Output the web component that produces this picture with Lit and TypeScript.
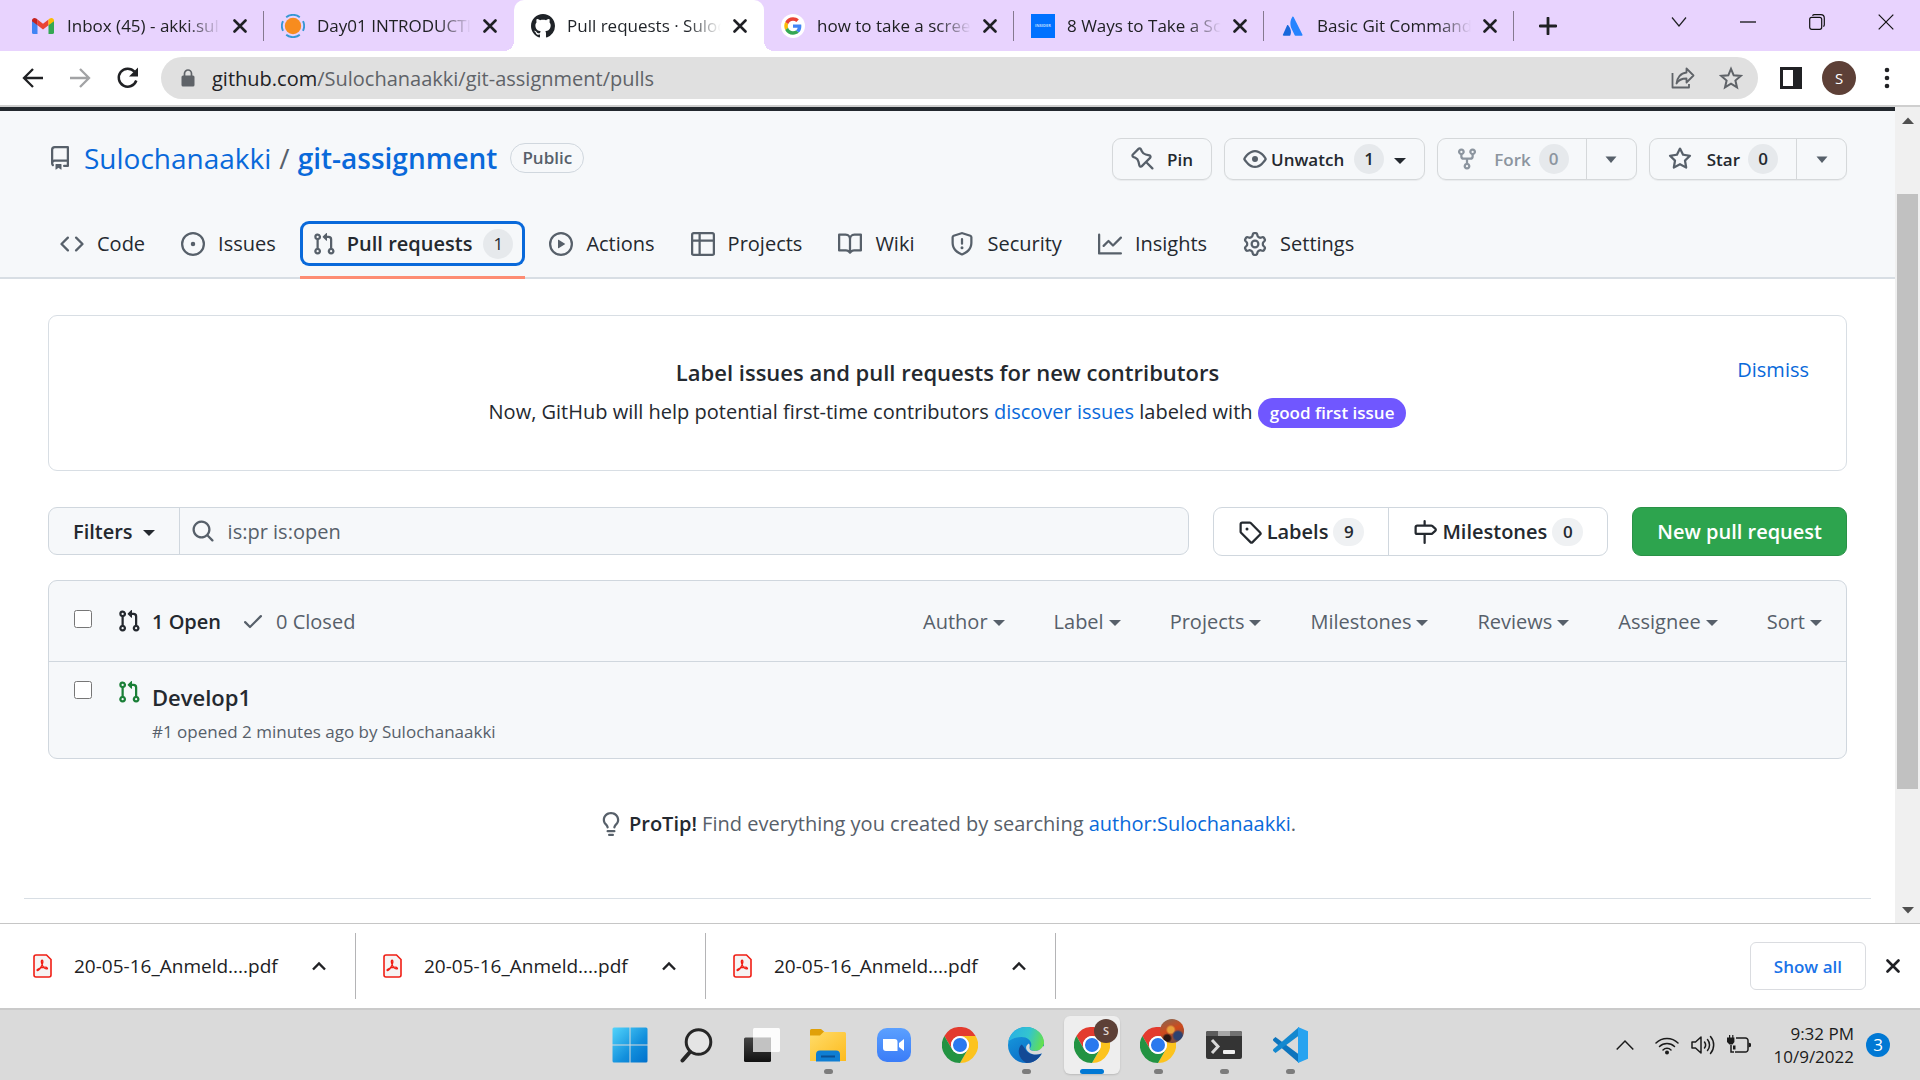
import { LitElement, html, css, svg, nothing, TemplateResult, SVGTemplateResult } from "lit";
import { customElement } from "lit/decorators.js";
import { classMap } from "lit/directives/class-map.js";

const OCTICONS: Record<string, string> = {
  repo: "M2 2.5A2.5 2.5 0 014.5 0h8.75a.75.75 0 01.75.75v12.5a.75.75 0 01-.75.75h-2.5a.75.75 0 110-1.5h1.75v-2h-8a1 1 0 00-.714 1.7.75.75 0 01-1.072 1.05A2.495 2.495 0 012 11.5v-9zm10.5-1V9h-8c-.356 0-.694.074-1 .208V2.5a1 1 0 011-1h8zM5 12.25v3.25a.25.25 0 00.4.2l1.45-1.087a.25.25 0 01.3 0L8.6 15.7a.25.25 0 00.4-.2v-3.25a.25.25 0 00-.25-.25h-3.5a.25.25 0 00-.25.25z",
  code: "M4.72 3.22a.75.75 0 011.06 1.06L2.06 8l3.72 3.72a.75.75 0 11-1.06 1.06L.47 8.53a.75.75 0 010-1.06l4.25-4.25zm6.56 0a.75.75 0 10-1.06 1.06L13.94 8l-3.72 3.72a.75.75 0 101.06 1.06l4.25-4.25a.75.75 0 000-1.06l-4.25-4.25z",
  issue: "M8 9.5a1.5 1.5 0 100-3 1.5 1.5 0 000 3zM8 0a8 8 0 100 16A8 8 0 008 0zM1.5 8a6.5 6.5 0 1113 0 6.5 6.5 0 01-13 0z",
  pull: "M7.177 3.073L9.573.677A.25.25 0 0110 .854v4.792a.25.25 0 01-.427.177L7.177 3.427a.25.25 0 010-.354zM3.75 2.5a.75.75 0 100 1.5.75.75 0 000-1.5zm-2.25.75a2.25 2.25 0 113 2.122v5.256a2.251 2.251 0 11-1.5 0V5.372A2.25 2.25 0 011.5 3.25zM11 2.5h-1V4h1a1 1 0 011 1v5.628a2.251 2.251 0 101.5 0V5A2.5 2.5 0 0011 2.5zm1 10.25a.75.75 0 111.5 0 .75.75 0 01-1.5 0zM3.75 12a.75.75 0 100 1.5.75.75 0 000-1.5z",
  play: "M1.5 8a6.5 6.5 0 1113 0 6.5 6.5 0 01-13 0zM8 0a8 8 0 100 16A8 8 0 008 0zM6.379 5.227A.25.25 0 006 5.442v5.117a.25.25 0 00.379.214l4.264-2.559a.25.25 0 000-.428L6.379 5.227z",
  table: "M0 1.75C0 .784.784 0 1.75 0h12.5C15.216 0 16 .784 16 1.75v3.585a.746.746 0 010 .83v8.085A1.75 1.75 0 0114.25 16H6.309a.748.748 0 01-1.118 0H1.75A1.75 1.75 0 010 14.25V6.165a.746.746 0 010-.83V1.75zM1.5 6.5v7.75c0 .138.112.25.25.25H5v-8H1.5zM5 5H1.5V1.75a.25.25 0 01.25-.25H5V5zm1.5 1.5v8h7.75a.25.25 0 00.25-.25V6.5h-8zm8-1.5h-8V1.5h7.75a.25.25 0 01.25.25V5z",
  book: "M0 1.75A.75.75 0 01.75 1h4.253c1.227 0 2.317.59 3 1.501A3.744 3.744 0 0111.006 1h4.245a.75.75 0 01.75.75v10.5a.75.75 0 01-.75.75h-4.507a2.25 2.25 0 00-1.591.659l-.622.621a.75.75 0 01-1.06 0l-.622-.621A2.25 2.25 0 005.258 13H.75a.75.75 0 01-.75-.75V1.75zm8.755 3a2.25 2.25 0 012.25-2.25H14.5v9h-3.757c-.71 0-1.4.201-1.992.572l.004-7.322zm-1.504 7.324l.004-5.073-.002-2.253A2.25 2.25 0 005.003 2.5H1.5v9h3.757a3.75 3.75 0 011.994.574z",
  shield: "M7.467.133a1.75 1.75 0 011.066 0l5.25 1.68A1.75 1.75 0 0115 3.48V7c0 1.566-.32 3.182-1.303 4.682-.983 1.498-2.585 2.813-5.032 3.855a1.7 1.7 0 01-1.33 0c-2.447-1.042-4.049-2.357-5.032-3.855C1.32 10.182 1 8.566 1 7V3.48a1.75 1.75 0 011.217-1.667l5.25-1.68zm.61 1.429a.25.25 0 00-.153 0l-5.25 1.68a.25.25 0 00-.174.238V7c0 1.358.275 2.666 1.057 3.86.784 1.194 2.121 2.34 4.366 3.297a.2.2 0 00.154 0c2.245-.956 3.582-2.104 4.366-3.298C13.225 9.666 13.5 8.36 13.5 7V3.48a.25.25 0 00-.174-.237l-5.25-1.68zM9 10.5a1 1 0 11-2 0 1 1 0 012 0zm-.25-5.75a.75.75 0 10-1.5 0v3a.75.75 0 001.5 0v-3z",
  graph: "M1.5 1.75a.75.75 0 00-1.5 0v12.5c0 .414.336.75.75.75h14.5a.75.75 0 000-1.5H1.5V1.75zm14.28 2.53a.75.75 0 00-1.06-1.06L10 7.94 7.53 5.47a.75.75 0 00-1.06 0L3.22 8.72a.75.75 0 001.06 1.06L7 7.06l2.47 2.47a.75.75 0 001.06 0l5.25-5.25z",
  gear: "M7.429 1.525a6.593 6.593 0 011.142 0c.036.003.108.036.137.146l.289 1.105c.147.56.55.967.997 1.189.174.086.341.183.501.29.417.278.97.423 1.53.27l1.102-.303c.11-.03.175.016.195.046.219.31.41.641.573.989.014.031.022.11-.059.19l-.815.806c-.411.406-.562.957-.53 1.456a4.588 4.588 0 010 .582c-.032.499.119 1.05.53 1.456l.815.806c.08.08.073.159.059.19a6.494 6.494 0 01-.573.99c-.02.029-.086.074-.195.045l-1.103-.303c-.559-.153-1.112-.008-1.529.27-.16.107-.327.204-.5.29-.449.222-.851.628-.998 1.189l-.289 1.105c-.029.11-.101.143-.137.146a6.613 6.613 0 01-1.142 0c-.036-.003-.108-.037-.137-.146l-.289-1.105c-.147-.56-.55-.967-.997-1.189a4.502 4.502 0 01-.501-.29c-.417-.278-.97-.423-1.53-.27l-1.102.303c-.11.03-.175-.016-.195-.046a6.492 6.492 0 01-.573-.989c-.014-.031-.022-.11.059-.19l.815-.806c.411-.406.562-.957.53-1.456a4.587 4.587 0 010-.582c.032-.499-.119-1.05-.53-1.456l-.815-.806c-.08-.08-.073-.159-.059-.19a6.44 6.44 0 01.573-.99c.02-.029.086-.075.195-.045l1.103.303c.559.153 1.112.008 1.529-.27.16-.107.327-.204.5-.29.449-.222.851-.628.998-1.189l.289-1.105c.029-.11.101-.143.137-.146zM8 0c-.236 0-.47.01-.701.03-.743.065-1.29.615-1.458 1.261l-.29 1.106c-.017.066-.078.158-.211.224a5.994 5.994 0 00-.668.386c-.123.082-.233.09-.3.071L3.27 2.776c-.644-.177-1.392.02-1.82.63a7.977 7.977 0 00-.704 1.217c-.315.675-.111 1.422.363 1.891l.815.806c.05.048.098.147.088.294a6.084 6.084 0 000 .772c.01.147-.038.246-.088.294l-.815.806c-.474.469-.678 1.216-.363 1.891.2.428.436.835.704 1.218.428.609 1.176.806 1.82.63l1.103-.303c.066-.019.176-.011.299.071.213.143.436.272.668.386.133.066.194.158.212.224l.289 1.106c.169.646.715 1.196 1.458 1.26a8.094 8.094 0 001.402 0c.743-.064 1.29-.614 1.458-1.26l.29-1.106c.017-.066.078-.158.211-.224a5.98 5.98 0 00.668-.386c.123-.082.233-.09.3-.071l1.102.302c.644.177 1.392-.02 1.82-.63.268-.382.505-.789.704-1.217.315-.675.111-1.422-.364-1.891l-.814-.806c-.05-.048-.098-.147-.088-.294a6.1 6.1 0 000-.772c-.01-.147.039-.246.088-.294l.814-.806c.475-.469.679-1.216.364-1.891a7.992 7.992 0 00-.704-1.218c-.428-.609-1.176-.806-1.82-.63l-1.103.303c-.066.019-.176.011-.299-.071a5.991 5.991 0 00-.668-.386c-.133-.066-.194-.158-.212-.224L10.16 1.29C9.99.645 9.444.095 8.701.031A8.094 8.094 0 008 0zm1.5 8a1.5 1.5 0 11-3 0 1.5 1.5 0 013 0zM11 8a3 3 0 11-6 0 3 3 0 016 0z",
  eye: "M1.679 7.932c.412-.621 1.242-1.75 2.366-2.717C5.175 4.242 6.527 3.5 8 3.5c1.473 0 2.824.742 3.955 1.715 1.124.967 1.954 2.096 2.366 2.717a.119.119 0 010 .136c-.412.621-1.242 1.75-2.366 2.717C10.825 11.758 9.473 12.5 8 12.5c-1.473 0-2.824-.742-3.955-1.715C2.92 9.818 2.09 8.69 1.679 8.068a.119.119 0 010-.136zM8 2c-1.981 0-3.67.992-4.933 2.078C1.797 5.169.88 6.423.43 7.1a1.619 1.619 0 000 1.798c.45.678 1.367 1.932 2.637 3.024C4.329 13.008 6.019 14 8 14c1.981 0 3.67-.992 4.933-2.078 1.27-1.091 2.187-2.345 2.637-3.023a1.619 1.619 0 000-1.798c-.45-.678-1.367-1.932-2.637-3.023C11.671 2.992 9.981 2 8 2zm0 8a2 2 0 100-4 2 2 0 000 4z",
  fork: "M5 3.25a.75.75 0 11-1.5 0 .75.75 0 011.5 0zm0 2.122a2.25 2.25 0 10-1.5 0v.878A2.25 2.25 0 005.75 8.5h1.5v2.128a2.251 2.251 0 101.5 0V8.5h1.5a2.25 2.25 0 002.25-2.25v-.878a2.25 2.25 0 10-1.5 0v.878a.75.75 0 01-.75.75h-4.5A.75.75 0 015 6.25v-.878zm3.75 7.378a.75.75 0 11-1.5 0 .75.75 0 011.5 0zm3-8.75a.75.75 0 100-1.5.75.75 0 000 1.5z",
  star: "M8 .25a.75.75 0 01.673.418l1.882 3.815 4.21.612a.75.75 0 01.416 1.279l-3.046 2.97.719 4.192a.75.75 0 01-1.088.791L8 12.347l-3.766 1.98a.75.75 0 01-1.088-.79l.72-4.194L.818 6.374a.75.75 0 01.416-1.28l4.21-.611L7.327.668A.75.75 0 018 .25zm0 2.445L6.615 5.5a.75.75 0 01-.564.41l-3.097.45 2.24 2.184a.75.75 0 01.216.664l-.528 3.084 2.769-1.456a.75.75 0 01.698 0l2.77 1.456-.53-3.084a.75.75 0 01.216-.664l2.24-2.183-3.096-.45a.75.75 0 01-.564-.41L8 2.694v.001z",
  pin: "M4.456.734a1.75 1.75 0 012.826.504l.613 1.327a3.081 3.081 0 002.084 1.707l2.454.584c1.332.317 1.8 1.972.832 2.94L11.06 10l3.72 3.72a.75.75 0 11-1.061 1.06L10 11.06l-2.204 2.205c-.968.968-2.623.5-2.94-.832l-.584-2.454a3.081 3.081 0 00-1.707-2.084l-1.327-.613a1.75 1.75 0 01-.504-2.826L4.456.734zM5.92 1.866a.25.25 0 00-.404-.072L1.794 5.516a.25.25 0 00.072.404l1.328.613A4.582 4.582 0 015.73 9.63l.584 2.454a.25.25 0 00.42.12l5.47-5.47a.25.25 0 00-.12-.42L9.63 5.73a4.581 4.581 0 01-3.098-2.537L5.92 1.866z",
  search: "M11.5 7a4.499 4.499 0 11-8.998 0A4.499 4.499 0 0111.5 7zm-.82 4.74a6 6 0 111.06-1.06l3.04 3.04a.75.75 0 11-1.06 1.06l-3.04-3.04z",
  tag: "M2.5 7.775V2.75a.25.25 0 01.25-.25h5.025a.25.25 0 01.177.073l6.25 6.25a.25.25 0 010 .354l-5.025 5.025a.25.25 0 01-.354 0l-6.25-6.25a.25.25 0 01-.073-.177zm-1.5 0V2.75C1 1.784 1.784 1 2.75 1h5.025c.464 0 .91.184 1.238.513l6.25 6.25a1.75 1.75 0 010 2.474l-5.026 5.026a1.75 1.75 0 01-2.474 0l-6.25-6.25A1.75 1.75 0 011 7.775zM6 5a1 1 0 100 2 1 1 0 000-2z",
  milestone: "M7.75 0a.75.75 0 01.75.75V3h3.634c.414 0 .814.147 1.13.414l2.07 1.75a1.75 1.75 0 010 2.672l-2.07 1.75a1.75 1.75 0 01-1.13.414H8.5v5.25a.75.75 0 11-1.5 0V10H2.75A1.75 1.75 0 011 8.25v-3.5C1 3.784 1.784 3 2.75 3H7V.75A.75.75 0 017.75 0zm0 8.5h4.384a.25.25 0 00.161-.06l2.07-1.75a.25.25 0 000-.38l-2.07-1.75a.25.25 0 00-.161-.06H2.75a.25.25 0 00-.25.25v3.5c0 .138.112.25.25.25h5z",
  check: "M13.78 4.22a.75.75 0 010 1.06l-7.25 7.25a.75.75 0 01-1.06 0L2.22 9.28a.75.75 0 011.06-1.06L6 10.94l6.72-6.72a.75.75 0 011.06 0z",
  bulb: "M8 1.5c-2.363 0-4 1.69-4 3.75 0 .984.424 1.625.984 2.304l.214.253c.223.264.47.556.673.848.284.411.537.896.621 1.49a.75.75 0 01-1.484.211c-.04-.282-.163-.547-.37-.847a8.695 8.695 0 00-.542-.68c-.084-.1-.173-.205-.268-.32C3.201 7.75 2.5 6.766 2.5 5.25 2.5 2.31 4.863 0 8 0s5.5 2.31 5.5 5.25c0 1.516-.701 2.5-1.328 3.259-.095.115-.184.22-.268.319-.207.245-.383.453-.541.681-.208.3-.33.565-.37.847a.75.75 0 01-1.485-.212c.084-.593.337-1.078.621-1.489.203-.292.45-.584.673-.848.075-.088.147-.173.213-.253.561-.679.985-1.32.985-2.304 0-2.06-1.637-3.75-4-3.75zM6 15.25a.75.75 0 01.75-.75h2.5a.75.75 0 010 1.5h-2.5a.75.75 0 01-.75-.75zM5.75 12a.75.75 0 000 1.5h4.5a.75.75 0 000-1.5h-4.5z",
  github: "M8 0C3.58 0 0 3.58 0 8c0 3.54 2.29 6.53 5.47 7.59.4.07.55-.17.55-.38 0-.19-.01-.82-.01-1.49-2.01.37-2.53-.49-2.69-.94-.09-.23-.48-.94-.82-1.13-.28-.15-.68-.52-.01-.53.63-.01 1.08.58 1.23.82.72 1.21 1.87.87 2.33.66.07-.52.28-.87.51-1.07-1.78-.2-3.64-.89-3.64-3.95 0-.87.31-1.59.82-2.15-.08-.2-.36-1.02.08-2.12 0 0 .67-.21 2.2.82.64-.18 1.32-.27 2-.27.68 0 1.36.09 2 .27 1.53-1.04 2.2-.82 2.2-.82.44 1.1.16 1.92.08 2.12.51.56.82 1.27.82 2.15 0 3.07-1.87 3.75-3.65 3.95.29.25.54.73.54 1.48 0 1.07-.01 1.93-.01 2.2 0 .21.15.46.55.38A8.013 8.013 0 0016 8c0-4.42-3.58-8-8-8z",
};

const octicon = (name: string, size = 24): TemplateResult =>
  html`<svg class="icon" width=${size} height=${size} viewBox="0 0 16 16" aria-hidden="true"><path fill="currentColor" fill-rule="evenodd" d=${OCTICONS[name]}></path></svg>`;

const glyph = (w: number, h: number, body: SVGTemplateResult, box = `0 0 ${w} ${h}`): TemplateResult =>
  html`<svg class="icon" width=${w} height=${h} viewBox=${box} aria-hidden="true">${body}</svg>`;

// Sits slightly below the optical middle, like a caret that follows a word.
const caret = () => glyph(12, 10, svg`<path fill="currentColor" d="M0 4h12L6 10z"></path>`);
const arrow = () => glyph(12, 8, svg`<path fill="currentColor" d="M.5 1.500h11L6 8z"></path>`);
const cross = () =>
  glyph(14, 14, svg`<path d="M1.500 1.500l11 11M12.500 1.500l-11 11" fill="none" stroke="#1f2024" stroke-width="2.600" stroke-linecap="round"></path>`);

const BASE = css`
  :host,
  * {
    box-sizing: border-box;
  }
  button,
  input {
    font: inherit;
    color: inherit;
    margin: 0;
  }
  button {
    padding: 0;
    border: 0;
    background: none;
    cursor: pointer;
    white-space: nowrap;
  }
  a {
    color: inherit;
    text-decoration: none;
    white-space: nowrap;
  }
  .icon {
    display: block;
    flex: none;
  }
`;

const gmail = () =>
  glyph(
    24,
    24,
    svg`<path fill="#4285f4" d="M1 6.500L6.500 10.500V20H2.600A1.600 1.600 0 0 1 1 18.400z"></path>
      <path fill="#34a853" d="M23 6.500L17.500 10.500V20h3.900a1.600 1.600 0 0 0 1.600-1.600z"></path>
      <path fill="#ea4335" d="M6.500 5.500L12 9.800l5.500-4.300v5.800L12 15.500l-5.500-4.200z"></path>
      <path fill="#c5221f" d="M1 6.500C1 4 3.700 3.300 5.300 4.600L6.500 5.500v5.800L1 7.200z"></path>
      <path fill="#fbbc04" d="M23 6.500c0-2.500-2.700-3.200-4.300-1.900l-1.200.9v5.800L23 7.200z"></path>`
  );

const dayLogo = () =>
  glyph(
    24,
    24,
    svg`<circle cx="12" cy="12" r="8.200" fill="#f78c1e"></circle>
      <g fill="none" stroke="#3797d4" stroke-width="1.900"><path d="M5.200 3.200a11 11 0 0 1 13.600 0"></path><path d="M5.200 20.800a11 11 0 0 0 13.600 0"></path><path d="M2 7.200a11 11 0 0 0 0 9.600"></path><path d="M22 7.200a11 11 0 0 1 0 9.600"></path></g>`
  );

const google = () =>
  glyph(
    24,
    24,
    svg`<circle cx="24" cy="24" r="33" fill="#fff"></circle>
      <path fill="#EA4335" d="M24 9.500c3.540 0 6.710 1.220 9.210 3.600l6.850-6.850C35.900 2.380 30.470 0 24 0 14.620 0 6.510 5.380 2.560 13.220l7.980 6.190C12.430 13.720 17.740 9.500 24 9.500z"></path>
      <path fill="#4285F4" d="M46.980 24.550c0-1.570-.15-3.090-.38-4.550H24v9.020h12.940c-.58 2.960-2.260 5.480-4.780 7.180l7.730 6c4.510-4.180 7.090-10.360 7.090-17.650z"></path>
      <path fill="#FBBC05" d="M10.530 28.590c-.48-1.450-.76-2.990-.76-4.590s.27-3.140.76-4.590l-7.980-6.190C.92 16.460 0 20.120 0 24c0 3.880.92 7.540 2.560 10.780l7.970-6.190z"></path>
      <path fill="#34A853" d="M24 48c6.480 0 11.930-2.130 15.890-5.810l-7.730-6c-2.150 1.450-4.920 2.300-8.160 2.300-6.260 0-11.570-4.220-13.470-9.910l-7.980 6.190C6.510 42.620 14.620 48 24 48z"></path>`,
    "-9 -9 66 66"
  );

const insider = () =>
  html`<svg class="icon" width="24" height="24" viewBox="0 0 24 24" aria-hidden="true"><rect width="24" height="24" fill="#0071ff"></rect><text x="12" y="13" fill="#b9d8ff" font-size="4" font-weight="700" text-anchor="middle">INSIDER</text></svg>`;

const atlassian = () =>
  glyph(
    24,
    24,
    svg`<path fill="#1868db" d="M7.200 11.300c-.4-.4-.9-.4-1.200.2L1.900 20.800c-.2.500.1.900.6.900h6.200c.3 0 .6-.2.700-.5 1.300-2.800.5-7-2.200-9.900z"></path>
      <path fill="#2684ff" d="M11.300 3c-2.500 4-2.300 8.400-.7 11.700l3.100 6.500c.1.300.4.500.7.500h6.500c.5 0 .8-.4.600-.9L12.600 3.100c-.3-.6-1-.7-1.300-.1z"></path>`
  );

const chromeLogo = () =>
  glyph(
    36,
    36,
    svg`<path fill="#e33b2e" d="M4.900 13A22 22 0 0 1 43.100 13H24A11 11 0 0 0 14.500 29.500z"></path>
      <path fill="#fcc31e" d="M43.100 13A22 22 0 0 1 24 46L33.500 29.500A11 11 0 0 0 24 13z"></path>
      <path fill="#229342" d="M24 46A22 22 0 0 1 4.900 13L14.500 29.500A11 11 0 0 0 33.500 29.500z"></path>
      <circle cx="24" cy="24" r="11" fill="#fff"></circle><circle cx="24" cy="24" r="8.600" fill="#2a79ee"></circle>`,
    "2 2 44 44"
  );

interface Tab {
  title: string;
  icon: () => TemplateResult;
  active?: boolean;
}

const TABS: Tab[] = [
  { title: "Inbox (45) - akki.sul", icon: gmail },
  { title: "Day01 INTRODUCTI", icon: dayLogo },
  { title: "Pull requests · Suloc", icon: () => octicon("github"), active: true },
  { title: "how to take a scree", icon: google },
  { title: "8 Ways to Take a Sc", icon: insider },
  { title: "Basic Git Command", icon: atlassian },
];

@customElement("browser-chrome")
export class BrowserChrome extends LitElement {
  static styles = [
    BASE,
    css`
      :host {
        display: block;
        color: #202124;
      }
      .strip {
        display: flex;
        align-items: stretch;
        height: 51px;
        padding-left: 14px;
        background: #e8d3fe;
      }
      .tab {
        display: flex;
        align-items: center;
        gap: 12px;
        flex: 0 1 250px;
        min-width: 0;
        padding: 0 17px;
        font-size: 17px;
        position: relative;
      }
      .tab.ruled::after {
        content: "";
        position: absolute;
        right: 0;
        top: 11px;
        height: 30px;
        width: 1px;
        background: #85798f;
      }
      .tab.active {
        background: #fff;
        border-radius: 10px 10px 0 0;
        color: #1f2328;
      }
      .tab.active::before,
      .tab.active::after {
        content: "";
        position: absolute;
        bottom: 0;
        width: 10px;
        height: 10px;
      }
      .tab.active::before {
        right: 100%;
        background: radial-gradient(circle at 0 0, transparent 10px, #fff 10px);
      }
      .tab.active::after {
        left: 100%;
        background: radial-gradient(circle at 100% 0, transparent 10px, #fff 10px);
      }
      .title {
        flex: 1;
        min-width: 0;
        white-space: nowrap;
        mask-image: linear-gradient(to right, #000 120px, transparent);
      }
      .plus {
        padding: 0 25px;
      }
      .window {
        display: flex;
        align-items: center;
        gap: 53px;
        margin-left: auto;
        padding: 0 26px 8px 0;
      }
      .bar {
        display: flex;
        align-items: center;
        height: 54px;
        padding: 0 24px 0 22px;
        background: #fff;
      }
      .nav {
        display: flex;
        gap: 25px;
        align-items: center;
      }
      .address {
        flex: 1;
        display: flex;
        align-items: center;
        height: 42px;
        margin: 0 22px 0 21px;
        padding: 0 15px 0 20px;
        border-radius: 21px;
        background: #e0e0e0;
        font-size: 20px;
        color: #5f6368;
      }
      .url {
        flex: 1;
        margin-left: 17px;
      }
      .host {
        color: #202124;
      }
      .tools {
        display: flex;
        gap: 24px;
      }
      .right {
        display: flex;
        align-items: center;
        gap: 20px;
      }
      .avatar {
        width: 34px;
        height: 34px;
        border-radius: 50%;
        background: #5d4037;
        color: #fff;
        font-size: 15px;
        line-height: 34px;
        text-align: center;
      }
      .rule {
        height: 2px;
        background: #cfcfcf;
      }
    `,
  ];

  render() {
    return html`
      <div class="strip">
        ${TABS.map((t, i) => {
          const ruled = !t.active && !TABS[i + 1]?.active;
          return html`<div class=${classMap({ tab: true, active: !!t.active, ruled })}>
            ${t.icon()}<span class="title">${t.title}</span>
            <button aria-label="Close tab">${cross()}</button>
          </div>`;
        })}
        <button class="plus" aria-label="New tab">
          ${glyph(18, 18, svg`<path d="M9 1v16M1 9h16" stroke="#202124" stroke-width="2.800" stroke-linecap="round"></path>`)}
        </button>
        <div class="window">
          <button aria-label="Search tabs">${glyph(16, 16, svg`<path d="M1 3.500l7 8.500 7-8.500" fill="none" stroke="#202124" stroke-width="1.200"></path>`)}</button>
          <button aria-label="Minimize">${glyph(16, 16, svg`<path d="M0 8h16" stroke="#111" stroke-width="1.300"></path>`)}</button>
          <button aria-label="Restore">${glyph(16, 16, svg`<g fill="none" stroke="#111" stroke-width="1.200"><rect x=".7" y="3.300" width="12" height="12" rx="2"></rect><path d="M3.500 1.800q.5-1.100 2-1.100h6.300q3.500 0 3.500 3.500v6.500q0 1.300-1 1.900"></path></g>`)}</button>
          <button aria-label="Close window">${glyph(16, 16, svg`<path d="M.7.7l14.600 14.600M15.300.7L.7 15.300" stroke="#111" stroke-width="1.200"></path>`)}</button>
        </div>
      </div>
      <div class="bar">
        <div class="nav">
          <button aria-label="Back">${glyph(22, 22, svg`<path d="M21 11H2.500M11 2L2 11l9 9" fill="none" stroke="#202124" stroke-width="2.300"></path>`)}</button>
          <button aria-label="Forward">${glyph(22, 22, svg`<path d="M1 11h18.500M11 2l9 9-9 9" fill="none" stroke="#a2a3a5" stroke-width="2.300"></path>`)}</button>
          <button aria-label="Reload">${glyph(24, 24, svg`<path d="M20.300 14.500A9 9 0 1 1 18.500 5.700" fill="none" stroke="#202124" stroke-width="2.500"></path><path d="M22 1.500v9h-9z" fill="#202124"></path>`)}</button>
        </div>
        <div class="address">
          ${glyph(14, 18, svg`<rect x=".5" y="6.500" width="13" height="11" rx="1.500" fill="#5f6368"></rect><path d="M3.500 7V4.500a3.500 3.500 0 0 1 7 0V7" fill="none" stroke="#5f6368" stroke-width="1.700"></path>`)}
          <span class="url"><span class="host">github.com</span>/Sulochanaakki/git-assignment/pulls</span>
          <div class="tools">
            <button aria-label="Share">${glyph(24, 24, svg`<g fill="none" stroke="#5f6368" stroke-width="1.800" stroke-linejoin="round"><path d="M1.500 7v14.500H18V18"></path><path d="M15.500 2.500l7 7-7 7V12.500c-4.500 0-8 1.500-10 5 .5-5.500 4-10.500 10-11z"></path></g>`)}</button>
            <button aria-label="Bookmark">${glyph(24, 24, svg`<path d="M12 2.800l2.700 6.500 7 .6-5.300 4.600 1.600 6.900-6-3.700-6 3.700 1.600-6.900L2.300 9.900l7-.6z" fill="none" stroke="#5f6368" stroke-width="2"></path>`)}</button>
          </div>
        </div>
        <div class="right">
          <button aria-label="Side panel">${glyph(22, 22, svg`<path fill="#202124" fill-rule="evenodd" d="M0 0h22v22H0zM3 3v16h10V3z"></path>`)}</button>
          <button class="avatar" aria-label="Profile">S</button>
          <button aria-label="Menu">${glyph(20, 22, svg`<g fill="#202124"><circle cx="11" cy="3" r="2.300"></circle><circle cx="11" cy="11" r="2.300"></circle><circle cx="11" cy="19" r="2.300"></circle></g>`)}</button>
        </div>
      </div>
      <div class="rule"></div>
    `;
  }
}

const NAV: [string, string, string?][] = [
  ["Code", "code"],
  ["Issues", "issue"],
  ["Pull requests", "pull", "1"],
  ["Actions", "play"],
  ["Projects", "table"],
  ["Wiki", "book"],
  ["Security", "shield"],
  ["Insights", "graph"],
  ["Settings", "gear"],
];

@customElement("repo-header")
export class RepoHeader extends LitElement {
  static styles = [
    BASE,
    css`
      :host {
        display: block;
        background: #f6f8fa;
        border-top: 4px solid #24292f;
        border-bottom: 2px solid #d8dee4;
        padding: 27px 48px 0;
      }
      .top {
        display: flex;
        align-items: center;
        justify-content: space-between;
        height: 42px;
      }
      h1 {
        display: flex;
        align-items: center;
        margin: 0;
        font-size: 28px;
        line-height: 40px;
        font-weight: 400;
        color: #57606a;
        padding-bottom: 2px;
      }
      h1 a {
        color: #0969da;
      }
      .owner {
        margin-left: 12px;
      }
      .slash {
        margin: 0 8px;
      }
      .repo {
        font-weight: 600;
      }
      .public {
        margin-left: 13px;
        padding: 0 11px;
        border: 1px solid #d0d7de;
        border-radius: 15px;
        font-size: 17px;
        line-height: 28px;
        font-weight: 600;
      }
      .actions {
        display: flex;
        gap: 12px;
        font-size: 17px;
        font-weight: 600;
        color: #24292f;
      }
      .btn {
        display: flex;
        height: 42px;
        border: 1px solid #d5d8da;
        border-radius: 9px;
        box-shadow: 0 1px 1px rgba(31, 35, 40, 0.06);
      }
      .main,
      .drop {
        display: flex;
        align-items: center;
        justify-content: center;
      }
      .main {
        padding: 0 18px;
      }
      .main .icon {
        color: #57606a;
      }
      .drop {
        width: 50px;
        border-left: 1px solid #d5d8da;
        color: #57606a;
      }
      .pin {
        gap: 12px;
      }
      .watch {
        gap: 10px;
      }
      .watch .text {
        margin-left: -6px;
      }
      .watch .caret .icon {
        color: #24292f;
      }
      .split {
        gap: 8px;
      }
      .split .icon {
        margin-right: 7px;
      }
      .off {
        padding: 0 17px;
      }
      .off,
      .off .icon {
        color: #8c959f;
      }
      .count {
        min-width: 30px;
        height: 30px;
        border-radius: 15px;
        background: #e6e9ec;
        font-size: 17px;
        line-height: 30px;
        text-align: center;
      }
      nav {
        display: flex;
        gap: 12px;
        margin-top: 41px;
        margin-bottom: -2px;
        font-size: 20px;
        color: #24292f;
      }
      nav .item {
        padding-bottom: 10px;
        border-bottom: 3px solid transparent;
      }
      nav .label {
        display: flex;
        align-items: center;
        gap: 13px;
        height: 45px;
        padding: 0 12px;
      }
      nav .icon {
        color: #57606a;
      }
      nav .current {
        border-bottom-color: #fd8c73;
      }
      .current .label {
        gap: 11px;
        border-radius: 9px;
        box-shadow: inset 0 0 0 3px #0969da;
        font-weight: 600;
      }
      .current .count {
        font-weight: 400;
      }
    `,
  ];

  render() {
    return html`
      <div class="top">
        <h1>
          ${octicon("repo")}
          <a class="owner" href="#owner">Sulochanaakki</a><span class="slash">/</span><a class="repo" href="#repo">git-assignment</a>
          <span class="public">Public</span>
        </h1>
        <div class="actions">
          <button class="btn main pin">${octicon("pin")}<span>Pin</span></button>
          <button class="btn main watch">${octicon("eye")}<span class="text">Unwatch</span><span class="count">1</span><span class="caret">${caret()}</span></button>
          <div class="btn">
            <button class="main split off">${octicon("fork")}<span>Fork</span><span class="count">0</span></button>
            <button class="drop" aria-label="Fork options">${arrow()}</button>
          </div>
          <div class="btn">
            <button class="main split">${octicon("star")}<span>Star</span><span class="count">0</span></button>
            <button class="drop" aria-label="Star options">${arrow()}</button>
          </div>
        </div>
      </div>
      <nav>
        ${NAV.map(
          ([label, icon, count]) => html`<a class=${classMap({ item: true, current: !!count })} href="#${icon}"
            ><span class="label">${octicon(icon)}<span>${label}</span>${count ? html`<span class="count">${count}</span>` : nothing}</span></a
          >`
        )}
      </nav>
    `;
  }
}

const FILTERS = ["Author", "Label", "Projects", "Milestones", "Reviews", "Assignee", "Sort"];

@customElement("pull-list")
export class PullList extends LitElement {
  static styles = [
    BASE,
    css`
      :host {
        display: block;
        padding: 36px 24px 0;
        font-size: 20px;
        color: #24292f;
      }
      .inner {
        padding: 0 24px;
      }
      .notice {
        display: grid;
        grid-template-columns: 1fr auto 1fr;
        padding: 38px 37px 42px;
        border: 1px solid #d8dee4;
        border-radius: 9px;
      }
      .message {
        grid-column: 2;
        text-align: center;
      }
      h3 {
        margin: 0 0 6px;
        font-size: 22px;
        line-height: 36px;
        font-weight: 600;
      }
      .message p {
        margin: 0;
        line-height: 32px;
      }
      .link {
        color: #0969da;
      }
      .pill {
        display: inline-block;
        padding: 0 12px;
        border-radius: 15px;
        background: #7057ff;
        color: #fff;
        font-size: 17px;
        line-height: 30px;
        font-weight: 600;
      }
      .dismiss {
        justify-self: end;
        align-self: start;
        line-height: 32px;
      }
      .tools {
        display: flex;
        align-items: flex-start;
        gap: 24px;
        margin-top: 36px;
        font-weight: 600;
      }
      .search {
        flex: 1;
        display: flex;
        height: 48px;
        border: 1px solid #d0d7de;
        border-radius: 9px;
        background: #f6f8fa;
      }
      .filters {
        display: flex;
        align-items: center;
        gap: 10px;
        padding: 0 24px;
        border-right: 1px solid #d0d7de;
      }
      .query {
        flex: 1;
        display: flex;
        align-items: center;
        gap: 13px;
        padding-left: 11px;
        color: #57606a;
        font-weight: 400;
      }
      .query input {
        flex: 1;
        border: 0;
        background: none;
        outline: 0;
        padding: 0;
      }
      .links {
        display: flex;
        height: 49px;
        border: 1px solid #d0d7de;
        border-radius: 9px;
      }
      .links a {
        display: flex;
        align-items: center;
        gap: 5px;
        padding: 0 24px;
      }
      .links a + a {
        border-left: 1px solid #d0d7de;
      }
      .count {
        min-width: 31px;
        border-radius: 14px;
        background: #eff1f3;
        font-size: 17px;
        line-height: 28px;
        text-align: center;
      }
      .new {
        height: 49px;
        padding: 0 24px;
        border: 1px solid #2a9147;
        border-radius: 9px;
        background: #2da44e;
        color: #fff;
        font-weight: 600;
      }
      .box {
        margin-top: 24px;
        border: 1px solid #d0d7de;
        border-radius: 9px;
        background: #f6f8fa;
      }
      .head {
        display: flex;
        align-items: center;
        height: 81px;
        padding: 0 24px 0 25px;
        border-bottom: 1px solid #d0d7de;
        color: #57606a;
      }
      input[type="checkbox"] {
        flex: none;
        width: 18px;
        height: 18px;
        margin: 0 25px 4px 0;
      }
      .state {
        display: flex;
        align-items: center;
        gap: 11px;
        margin-right: 20px;
      }
      .open {
        font-weight: 600;
        color: #24292f;
      }
      .menus {
        display: flex;
        gap: 49px;
        margin-left: auto;
      }
      .menu {
        display: flex;
        align-items: center;
        gap: 5px;
      }
      .row {
        display: flex;
        align-items: flex-start;
        padding: 18px 25px 12px;
      }
      .row input[type="checkbox"] {
        margin-top: 1px;
      }
      .green {
        color: #1a7f37;
        margin-right: 11px;
      }
      .name {
        font-size: 22px;
        line-height: 34px;
        font-weight: 600;
      }
      .meta {
        margin-top: 4px;
        font-size: 17px;
        line-height: 28px;
        color: #57606a;
      }
      .tip {
        display: flex;
        align-items: center;
        justify-content: center;
        gap: 6px;
        margin: 49px 0 58px;
        line-height: 32px;
        color: #57606a;
      }
      .tip b {
        font-weight: 600;
        color: #24292f;
      }
      hr {
        margin: 0;
        border: 0;
        border-top: 1px solid #d8dee4;
      }
    `,
  ];

  render() {
    return html`
      <div class="inner">
        <section class="notice">
          <div class="message">
            <h3>Label issues and pull requests for new contributors</h3>
            <p>
              Now, GitHub will help potential first-time contributors
              <a class="link" href="#discover">discover issues</a> labeled with <a class="pill" href="#label">good first issue</a>
            </p>
          </div>
          <button class="link dismiss">Dismiss</button>
        </section>
        <div class="tools">
          <div class="search">
            <button class="filters">Filters ${caret()}</button>
            <label class="query">${octicon("search")}<input type="text" aria-label="Search all pull requests" .value=${"is:pr is:open"} /></label>
          </div>
          <div class="links">
            <a href="#labels">${octicon("tag")}<span>Labels</span><span class="count">9</span></a>
            <a href="#milestones">${octicon("milestone")}<span>Milestones</span><span class="count">0</span></a>
          </div>
          <button class="new">New pull request</button>
        </div>
        <section class="box">
          <div class="head">
            <input type="checkbox" aria-label="Select all pull requests" />
            <a class="state open" href="#open">${octicon("pull")}1 Open</a>
            <a class="state" href="#closed">${octicon("check")}0 Closed</a>
            <div class="menus">${FILTERS.map((f) => html`<button class="menu">${f}${caret()}</button>`)}</div>
          </div>
          <div class="row">
            <input type="checkbox" aria-label="Select Develop1" />
            <span class="green">${octicon("pull")}</span>
            <div>
              <a class="name" href="#pull-1">Develop1</a>
              <div class="meta">#1 opened 2 minutes ago by <a href="#author">Sulochanaakki</a></div>
            </div>
          </div>
        </section>
        <div class="tip">
          ${octicon("bulb")}
          <span><b>ProTip!</b> Find everything you created by searching <a class="link" href="#search">author:Sulochanaakki</a>.</span>
        </div>
      </div>
      <hr />
    `;
  }
}

@customElement("scroll-track")
export class ScrollTrack extends LitElement {
  static styles = css`
    :host {
      display: flex;
      flex-direction: column;
      align-items: center;
      width: 25px;
      padding: 10px 0 9px;
      background: #f0f0f0;
    }
    .before {
      flex: 70;
    }
    .thumb {
      flex: 595;
      width: 21px;
      background: #c1c1c1;
    }
    .after {
      flex: 118;
    }
  `;
  render() {
    return html`
      <svg width="12" height="7" viewBox="0 0 12 7"><path d="M0 7h12L6 .5z" fill="#505050"></path></svg>
      <div class="before"></div>
      <div class="thumb"></div>
      <div class="after"></div>
      <svg width="12" height="7" viewBox="0 0 12 7"><path d="M0 0h12L6 6.500z" fill="#505050"></path></svg>
    `;
  }
}

@customElement("download-shelf")
export class DownloadShelf extends LitElement {
  static styles = [
    BASE,
    css`
      :host {
        display: flex;
        align-items: center;
        height: 85px;
        padding: 0 20px 0 6px;
        border-top: 1px solid #c6c6c6;
        background: #fff;
        color: #202124;
        font-size: 19px;
      }
      .file {
        display: flex;
        align-items: center;
        width: 350px;
        height: 66px;
        padding: 0 28px 0 27px;
        border-right: 1px solid #b4b4b6;
      }
      .file span {
        flex: 1;
        margin-left: 22px;
      }
      .all {
        height: 48px;
        margin-left: auto;
        margin-right: 20px;
        padding: 0 23px;
        border: 1px solid #dadce0;
        border-radius: 6px;
        font-size: 17px;
        font-weight: 600;
        color: #1a73e8;
      }
    `,
  ];
  render() {
    return html`
      ${[1, 2, 3].map(
        () => html`<div class="file">
          ${glyph(
            19,
            24,
            svg`<path d="M3 1h10.500L18 5.500V21a2 2 0 0 1-2 2H3a2 2 0 0 1-2-2V3a2 2 0 0 1 2-2z" fill="#f6f4f4" stroke="#f01e14" stroke-width="1.600"></path>
            <path d="M9 6.200c1.600.2.800 4-1.100 7-1.100 1.900-2.500 3.500-3.500 3.500-1.400-.7 1.100-2.400 4.100-3 2.800-.7 5.500-.4 5.900.5.400 1.200-1.900 1-3.700-.8C8.800 11.500 7.500 6.500 9 6.200z" fill="none" stroke="#f01e14" stroke-width="1.300"></path>`
          )}
          <span>20-05-16_Anmeld....pdf</span>
          <button aria-label="File options">${glyph(16, 12, svg`<path d="M2 9.500l6-6 6 6" fill="none" stroke="#202124" stroke-width="2.400"></path>`)}</button>
        </div>`
      )}
      <button class="all">Show all</button>
      <button aria-label="Close shelf">${cross()}</button>
    `;
  }
}

interface App {
  label: string;
  icon: () => TemplateResult;
  state?: "running" | "active";
  badge?: "letter" | "photo";
}

const APPS: App[] = [
  {
    label: "Start",
    icon: () =>
      glyph(36, 36, svg`<defs><linearGradient id="win" x1="0" y1="0" x2="1" y2="1"><stop offset="0" stop-color="#52d4fb"></stop><stop offset=".6" stop-color="#128fdc"></stop><stop offset="1" stop-color="#0070cc"></stop></linearGradient></defs><path fill="url(#win)" d="M2 .5h15.500v17H.5V2A1.500 1.500 0 0 1 2 .5zM18.500.5H34A1.500 1.500 0 0 1 35.500 2v15.500h-17zM.5 18.500h17v17H2A1.500 1.500 0 0 1 .5 34zM18.500 18.500h17V34a1.500 1.500 0 0 1-1.500 1.500H18.500z"></path>`),
  },
  {
    label: "Search",
    icon: () => glyph(36, 36, svg`<circle cx="20.500" cy="15" r="12.300" fill="#e4e4e4" stroke="#262626" stroke-width="3"></circle><path d="M12 25l-7.500 8.500" stroke="#262626" stroke-width="4" stroke-linecap="round"></path>`),
  },
  {
    label: "Task view",
    icon: () => glyph(36, 36, svg`<defs><linearGradient id="tv" x1="0" y1="0" x2="0" y2="1"><stop offset="0" stop-color="#454545"></stop><stop offset="1" stop-color="#111"></stop></linearGradient></defs><rect y="10.500" width="27" height="24.500" rx="1.500" fill="url(#tv)"></rect><rect x="9" y="1" width="27" height="24" rx="1.500" fill="#fff" fill-opacity=".92"></rect><rect x="9" y="10.500" width="18" height="14.500" fill="#c2c2c2"></rect>`),
  },
  {
    label: "File Explorer",
    state: "running",
    icon: () => glyph(36, 36, svg`<defs><linearGradient id="fx" x1="0" y1="0" x2="1" y2="1"><stop offset="0" stop-color="#ffdc6a"></stop><stop offset="1" stop-color="#fdbb1d"></stop></linearGradient></defs><path fill="#e0a008" d="M0 3.500A1.500 1.500 0 0 1 1.500 2H11l3.500 3L12 12H0z"></path><path fill="url(#fx)" d="M0 8.500h10L13.500 5H34.500A1.500 1.500 0 0 1 36 6.500V34H0z"></path><path fill="#0f7ed3" d="M6 34.500v-7a4 4 0 0 1 4-4h16a4 4 0 0 1 4 4v7z"></path><rect x="11" y="28.500" width="14" height="2" fill="#0a4f94"></rect>`),
  },
  {
    label: "Zoom",
    icon: () => glyph(36, 36, svg`<defs><linearGradient id="zm" x1="0" y1="0" x2="0" y2="1"><stop offset="0" stop-color="#5ba0ff"></stop><stop offset="1" stop-color="#3a7cf8"></stop></linearGradient></defs><rect x="1" y="1" width="34" height="34" rx="10" fill="url(#zm)"></rect><path fill="#fff" d="M7 12h11.500a3 3 0 0 1 3 3v9H10a3 3 0 0 1-3-3zM23 16l5-4v12l-5-4z"></path>`),
  },
  { label: "Google Chrome", icon: chromeLogo },
  {
    label: "Microsoft Edge",
    state: "running",
    icon: () =>
      glyph(36, 36, svg`<defs><linearGradient id="ea" x1="0" y1=".3" x2="1" y2=".5"><stop offset="0" stop-color="#2ab0e4"></stop><stop offset=".55" stop-color="#33c4cf"></stop><stop offset="1" stop-color="#64e04e"></stop></linearGradient><linearGradient id="eb" x1="0" y1="0" x2=".6" y2="1"><stop offset="0" stop-color="#19a0e0"></stop><stop offset="1" stop-color="#0b6bc5"></stop></linearGradient></defs>
        <circle cx="18" cy="18" r="18" fill="url(#eb)"></circle>
        <path fill="url(#ea)" d="M.4 14.500C2 5.500 9.500 0 18 0c10.500 0 18 7.500 18 15.500 0 5-4 8.500-9 8.500-3 0-5-1-5-2.500 0-1 1.300-1.700 1.300-4C23.300 13.500 19 10 13.500 10 7 10 2 13 .4 14.500z"></path>
        <path fill="#134a96" d="M13.500 17.500c-4.500 4-4 14 5 18.500 6.500 0 11.500-3.500 14.500-8.500.5-1-.2-1.500-1.200-1-3.300 1.500-8.800 1.500-12.300-1.500-2.200-2-2.500-4.500-6-7.500z"></path>
        <path fill="#dadada" d="M36 24.500c-.6 1.300-1.400 2.300-2.500 2-4 1.800-9.500 1.500-13-1.500-3-2.500-3.500-6 .3-8.500 1.500 1.500.7 3.200.7 4.500 0 1.800 2 3 5 3 4 0 7-2 8.600-5l1.500 1z"></path>`),
  },
  { label: "Google Chrome (S)", icon: chromeLogo, state: "active", badge: "letter" },
  { label: "Google Chrome (2)", icon: chromeLogo, state: "running", badge: "photo" },
  {
    label: "Terminal",
    state: "running",
    icon: () => glyph(36, 36, svg`<rect y="4" width="36" height="28" rx="2" fill="#343434"></rect><path d="M2 4h10v5H0V6a2 2 0 0 1 2-2z" fill="#5c5c5c"></path><path d="M12 4h12v5H12z" fill="#a6a6a6"></path><path d="M24 4h10a2 2 0 0 1 2 2v3H24z" fill="#727272"></path><path d="M6 13l6 6.500L6 26" fill="none" stroke="#d8d8d8" stroke-width="3"></path><rect x="17" y="23" width="12" height="4" rx="1" fill="#efefef"></rect>`),
  },
  {
    label: "Visual Studio Code",
    state: "running",
    icon: () => glyph(36, 36, svg`<path fill="#0d74bd" d="M1 12.200l2.500-2.200L27 27.500V36L1.200 13.800z"></path><path fill="#1488cf" d="M1 23.800l2.500 2.200L27 8.500V0L1.200 22.200z"></path><path fill="#27a3f0" d="M26 0l10 4.200v27.600L26 36z"></path>`),
  },
];

@customElement("task-bar")
export class TaskBar extends LitElement {
  static styles = [
    BASE,
    css`
      :host {
        display: grid;
        grid-template-columns: 1fr auto 1fr;
        align-items: center;
        height: 72px;
        border-top: 2px solid #cacaca;
        background: #dadada;
        color: #1b1b1b;
      }
      .apps {
        grid-column: 2;
        display: flex;
        gap: 10px;
      }
      .app {
        position: relative;
        display: flex;
        justify-content: center;
        width: 56px;
        height: 58px;
        padding-top: 11px;
        border-radius: 6px;
      }
      .active {
        background: #eeeeee;
        box-shadow: 0 1px 2px rgba(0, 0, 0, 0.15);
      }
      .running::after,
      .active::after {
        content: "";
        position: absolute;
        bottom: 0;
        width: 9px;
        height: 5px;
        border-radius: 3px;
        background: #7c7c7c;
      }
      .active::after {
        width: 24px;
        background: #0078d4;
      }
      .badge {
        position: absolute;
        right: 2px;
        top: 3px;
        width: 24px;
        height: 24px;
        border-radius: 50%;
        background: #5d4037;
        color: #e0d6d2;
        font-size: 11px;
        font-weight: 600;
        line-height: 24px;
        text-align: center;
      }
      .photo {
        background: radial-gradient(circle at 75% 70%, #2c4270 4px, transparent 6px), radial-gradient(circle at 45% 45%, #e8a03c 3px, transparent 5px),
          radial-gradient(circle at 30% 80%, #2a1712 3px, transparent 5px), linear-gradient(160deg, #7f6a58, #cf4a1c 45%, #5b4a4c);
      }
      .tray {
        justify-self: end;
        display: flex;
        align-items: center;
        gap: 12px;
        padding-right: 30px;
      }
      .up {
        margin-right: 9px;
      }
      time {
        min-width: 91px;
        font-size: 17px;
        line-height: 23px;
        text-align: right;
        white-space: nowrap;
      }
      .note {
        width: 24px;
        height: 24px;
        border-radius: 50%;
        background: #0078d4;
        color: #fff;
        font-size: 17px;
        line-height: 24px;
        text-align: center;
      }
    `,
  ];
  render() {
    return html`
      <div class="apps">
        ${APPS.map(
          (a) => html`<button class=${classMap({ app: true, running: a.state === "running", active: a.state === "active" })} aria-label=${a.label}>
            ${a.icon()}${a.badge ? html`<span class=${classMap({ badge: true, photo: a.badge === "photo" })}>${a.badge === "letter" ? "S" : nothing}</span>` : nothing}
          </button>`
        )}
      </div>
      <div class="tray">
        <button class="up" aria-label="Hidden icons">${glyph(18, 12, svg`<path d="M.7 10.500L9 2l8.300 8.500" fill="none" stroke="#1b1b1b" stroke-width="1.500"></path>`)}</button>
        ${glyph(24, 20, svg`<g fill="none" stroke="#1b1b1b" stroke-width="1.500" stroke-linecap="round"><path d="M1 8a15.500 15.500 0 0 1 22 0"></path><path d="M4.500 11.500a10.600 10.600 0 0 1 15 0"></path><path d="M8 15a5.700 5.700 0 0 1 8 0"></path></g><circle cx="12" cy="17.500" r="2" fill="#1b1b1b"></circle>`)}
        ${glyph(24, 20, svg`<g fill="none" stroke="#1b1b1b" stroke-width="1.500" stroke-linejoin="round" stroke-linecap="round"><path d="M1 7h3.500L10 2v16l-5.500-5H1z"></path><path d="M13.500 7a5 5 0 0 1 0 6"></path><path d="M16.500 4.500a8.500 8.500 0 0 1 0 11"></path><path d="M19.500 1.500a13 13 0 0 1 0 17"></path></g>`)}
        ${glyph(24, 20, svg`<path d="M9 3h9.500A2.500 2.500 0 0 1 21 5.500v9a2.500 2.500 0 0 1-2.500 2.500H8M4 10v7h3" fill="none" stroke="#1b1b1b" stroke-width="1.500"></path><path d="M0 2.500h2V0h1.200v2.500h2V0h1.200v2.500h1V7L5.500 9.500H2.500L0 7zM21.500 7.500l2.500 1v3l-2.500 1zM6 10.500h2.500v4H6z" fill="#1b1b1b"></path>`)}
        <time datetime="2022-10-09T21:32">9:32 PM<br />10/9/2022</time>
        <span class="note">3</span>
      </div>
    `;
  }
}

@customElement("app-root")
export class AppRoot extends LitElement {
  static styles = css`
    :host {
      display: flex;
      flex-direction: column;
      min-height: 100vh;
      background: #fff;
      font-family: "Open Sans", "Noto Sans", sans-serif;
    }
    .view {
      flex: 1;
      display: flex;
    }
    .page {
      flex: 1;
      min-width: 0;
    }
  `;
  render() {
    return html`
      <browser-chrome></browser-chrome>
      <div class="view">
        <main class="page">
          <repo-header></repo-header>
          <pull-list></pull-list>
        </main>
        <scroll-track></scroll-track>
      </div>
      <download-shelf></download-shelf>
      <task-bar></task-bar>
    `;
  }
}
